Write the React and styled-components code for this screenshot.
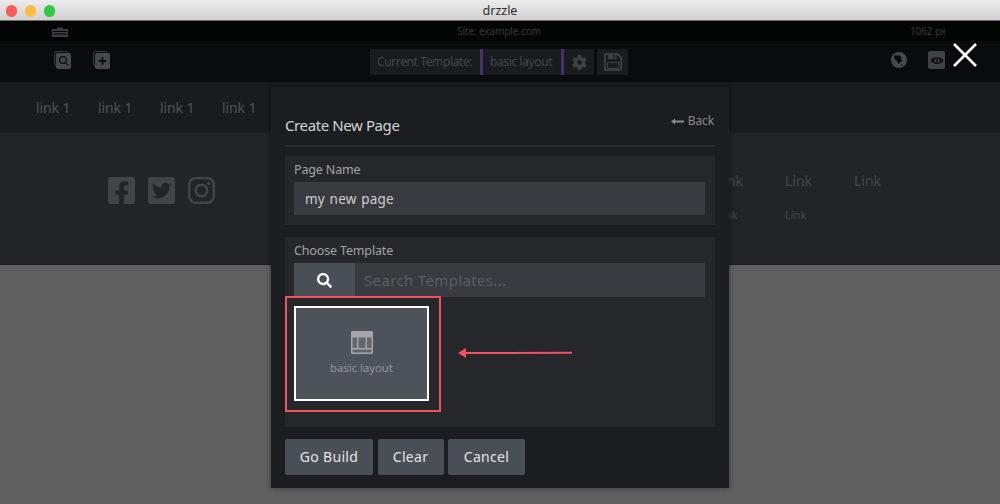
import React from "react";
import styled, { createGlobalStyle } from "styled-components";
import { FaFacebookSquare, FaTwitterSquare, FaInstagram, FaSearch } from "react-icons/fa";
import { FaGear } from "react-icons/fa6";

const Global = createGlobalStyle`
  html, body { margin: 0; padding: 0; background: #606060; }
  body { font-family: "Noto Sans", "Open Sans", sans-serif; }
  * { box-sizing: border-box; }
`;

const Screen = styled.div`
  position: relative;
  width: 1000px;
  height: 504px;
  overflow: hidden;
  display: flex;
  flex-direction: column;
`;

const TitleBar = styled.div`
  position: relative;
  flex: 0 0 21px;
  display: flex;
  align-items: center;
  justify-content: center;
  background: linear-gradient(#ececec, #d2d0d2);
  border-bottom: 1px solid #6b6b6b;
  font-size: 12.5px;
  color: #2c2c2c;
`;

const Lights = styled.div`
  position: absolute;
  left: 5.5px;
  top: 5px;
  display: flex;
  gap: 7.5px;
`;

const Light = styled.span`
  width: 11.5px;
  height: 11.5px;
  border-radius: 50%;
  background: ${(p) => p.$color};
`;

const InfoRow = styled.div`
  flex: 0 0 20px;
  display: grid;
  grid-template-columns: 457px 453px 90px;
  align-items: center;
  background: #030404;
  font-size: 10px;
  letter-spacing: -0.1px;
  color: #383839;
`;

const Briefcase = styled.svg`
  display: block;
  width: 16px;
  height: 10px;
  margin: 1px 0 0 52px;
`;

const ToolRow = styled.div`
  flex: 0 0 41px;
  display: flex;
  align-items: flex-start;
  background: #0a0b0c;
`;

const ToolLeft = styled.div`
  display: flex;
  gap: 22px;
  padding: 10px 0 0 54px;
  width: 370px;
`;

const TemplateGroup = styled.div`
  margin-top: 8px;
  display: flex;
  height: 26px;
  width: 258px;
  color: #45464a;
  font-size: 12px;
  letter-spacing: -0.38px;
  line-height: 26px;
`;

const TemplateCell = styled.div`
  background: #1a1b1e;
  width: ${(p) => p.$width}px;
  padding-left: ${(p) => p.$pad || 0}px;
  flex: none;
  white-space: nowrap;
  display: flex;
  align-items: center;
  justify-content: ${(p) => (p.$center ? "center" : "flex-start")};
  border-right: ${(p) => (p.$accent ? "3px solid #47306f" : "none")};
  margin-right: ${(p) => p.$gap || 0}px;
  color: ${(p) => (p.$center ? "#3f4043" : "inherit")};
`;

const ToolRight = styled.div`
  display: flex;
  align-items: center;
  gap: 21px;
  margin-left: 263px;
  padding-top: 10px;
`;

const EyeTile = styled.div`
  width: 17px;
  height: 18px;
  border-radius: 2px;
  background: #404144;
  display: flex;
  align-items: center;
  justify-content: center;
`;

const Nav = styled.div`
  flex: 0 0 51px;
  display: flex;
  align-items: center;
  gap: 28px;
  padding: 0 0 0 36px;
  background: #191c1f;
  font-size: 14px;
  letter-spacing: -0.1px;
  color: #4e5154;
`;

const NavLink = styled.span`
  width: 34px;
  white-space: nowrap;
`;

const Footer = styled.div`
  flex: 0 0 132px;
  display: flex;
  background: #232427;
  border-bottom: 1px solid #1c1d20;
`;

const Socials = styled.div`
  display: flex;
  gap: 9px;
  padding: 42px 0 0 106px;
  color: #434446;
  width: 716px;
`;

const LinkColumns = styled.div`
  display: grid;
  grid-template-columns: 69px 69px 69px;
  grid-template-rows: 20px 20px;
  row-gap: 14px;
  padding-top: 37px;
  align-items: center;
  align-content: start;
`;

const FooterLink = styled.span`
  font-size: ${(p) => (p.$small ? 11 : 14)}px;
  color: #444548;
`;

const Page = styled.div`
  flex: 1;
  background: #606060;
`;

const Modal = styled.div`
  position: absolute;
  left: 271px;
  top: 87px;
  width: 458px;
  height: 401px;
  padding: 0 14px;
  background: #1c1d20;
  box-shadow: 0 0 6px rgba(0, 0, 0, 0.45);
  display: flex;
  flex-direction: column;
`;

const ModalHead = styled.div`
  height: 60px;
  display: flex;
  justify-content: space-between;
  align-items: flex-start;
  border-bottom: 2px solid #2a2b2e;
  margin-bottom: 9px;
`;

const ModalTitle = styled.h2`
  margin: 28px 0 0;
  font-size: 15px;
  font-weight: 400;
  letter-spacing: -0.4px;
  line-height: 20px;
  color: #d4d4d4;
`;

const Back = styled.span`
  margin: 26px 1px 0 0;
  font-size: 12px;
  line-height: 16px;
  letter-spacing: -0.1px;
  color: #8b8b8e;
  display: flex;
  align-items: center;
  gap: 4px;
`;

const Panel = styled.div`
  background: #26272b;
  height: ${(p) => p.$height}px;
  padding: 5px 10px 0 9px;
  margin-bottom: ${(p) => p.$gap || 0}px;
  flex: none;
`;

const Label = styled.div`
  font-size: 12.5px;
  line-height: 17px;
  letter-spacing: -0.15px;
  color: #a3a3a6;
  margin-bottom: 4px;
`;

const TextInput = styled.div`
  height: 33px;
  background: #3a3b40;
  padding-left: 11px;
  font-size: 13.5px;
  line-height: 35px;
  letter-spacing: 0.2px;
  word-spacing: 1px;
  color: #cdcdcf;
`;

const SearchRow = styled.div`
  display: flex;
  height: 34px;
  background: #3a3b40;
`;

const SearchBtn = styled.div`
  width: 61px;
  background: #4a4f55;
  color: #fff;
  display: flex;
  align-items: center;
  justify-content: center;
`;

const Placeholder = styled.div`
  padding-left: 9px;
  font-size: 15px;
  line-height: 34px;
  letter-spacing: 0.35px;
  color: #5d5e62;
`;

const TemplateArea = styled.div`
  position: relative;
  padding-top: 9px;
`;

const TemplateCard = styled.div`
  width: 135px;
  height: 95px;
  border: 2px solid #fff;
  background: #4e5359;
  color: #92959a;
  font-size: 11.3px;
  line-height: 15px;
  display: flex;
  flex-direction: column;
  align-items: center;
  padding-top: 23px;
  gap: 6px;
`;

const Highlight = styled.div`
  position: absolute;
  left: -9px;
  top: -1px;
  width: 156px;
  height: 116px;
  border: 2px solid #f0525f;
`;

const Arrow = styled.svg`
  position: absolute;
  left: 164px;
  top: 50px;
`;

const Actions = styled.div`
  display: flex;
  gap: 4.5px;
  margin-top: 11.5px;
`;

const Btn = styled.button`
  width: ${(p) => p.$width}px;
  height: 36px;
  padding: 0;
  border: 0;
  border-radius: 2px;
  background: #4a4f55;
  color: #e4e4e6;
  font-family: inherit;
  font-size: 14px;
  letter-spacing: 0.3px;
`;

const Close = styled.svg`
  position: absolute;
  left: 952px;
  top: 42px;
`;

const CardIcon = ({ plus }) => (
  <svg width="17" height="18" viewBox="0 0 18 19">
    <rect x="0.5" y="0.5" width="14" height="15" rx="2" fill="none" stroke="#404144" />
    <rect x="2" y="2" width="16" height="17" rx="2" fill="#47484b" />
    {plus ? (
      <path d="M10 6.5v8M6 10.5h8" stroke="#0a0b0c" strokeWidth="2" />
    ) : (
      <g fill="none" stroke="#0a0b0c" strokeWidth="1.4">
        <circle cx="9.5" cy="9.5" r="3.6" />
        <path d="M12 12l3.2 3.2" />
      </g>
    )}
  </svg>
);

const SaveIcon = () => (
  <svg width="18" height="18" viewBox="0 0 18 18">
    <g fill="none" stroke="#3f4043">
      <path
        d="M2 0.9h11.3L17.1 4.7V16a1.1 1.1 0 0 1-1.1 1.1H2A1.1 1.1 0 0 1 0.9 16V2A1.1 1.1 0 0 1 2 0.9z"
        strokeWidth="1.8"
      />
      <rect x="3.5" y="9.5" width="11" height="6" strokeWidth="1" />
    </g>
    <rect x="4" y="1.5" width="8.5" height="4.5" fill="#3f4043" />
    <rect x="9.5" y="2.2" width="1.6" height="2.8" fill="#1a1b1e" />
  </svg>
);

const GlobeIcon = () => (
  <svg width="16" height="16" viewBox="0 0 16 16">
    <circle cx="8" cy="8" r="8" fill="#47484b" />
    <path d="M3 3.5h5.5l2 1.5-.5 2.5 1.5 1-4 3.5-1.5-3L3.5 7z" fill="#0a0b0c" />
    <path d="M10.5 12l1.5 1-1 1.2z" fill="#0a0b0c" />
  </svg>
);

const LayoutIcon = () => (
  <svg width="22" height="23" viewBox="0 0 22 23">
    <rect x="0" y="0" width="22" height="23" rx="1.5" fill="#a4a6a9" />
    <rect x="1.5" y="6.5" width="4.5" height="10.5" fill="#63676c" />
    <rect x="7.5" y="6.5" width="7" height="10.5" fill="#63676c" />
    <rect x="16" y="6.5" width="4.5" height="10.5" fill="#63676c" />
    <rect x="1.5" y="18.5" width="19" height="3" fill="#63676c" />
  </svg>
);

export default function App() {
  return (
    <Screen>
      <Global />
      <TitleBar>
        <Lights>
          <Light $color="#fc5b57" />
          <Light $color="#fdbc40" />
          <Light $color="#33c748" />
        </Lights>
        drzzle
      </TitleBar>
      <InfoRow>
        <Briefcase viewBox="0 0 16 10">
          <path d="M5 2V0.5h6V2h5v8H0V2z" fill="#3c3d40" />
          <path d="M1 4.5h14M1 7h14" stroke="#030404" strokeWidth="1" />
        </Briefcase>
        <span>Site: example.com</span>
        <span>1062 px</span>
      </InfoRow>
      <ToolRow>
        <ToolLeft>
          <CardIcon />
          <CardIcon plus />
        </ToolLeft>
        <TemplateGroup>
          <TemplateCell $width={113} $pad={7} $accent>Current Template:</TemplateCell>
          <TemplateCell $width={81} $pad={7} $accent>basic layout</TemplateCell>
          <TemplateCell $width={30} $center $gap={3}><FaGear size={15} /></TemplateCell>
          <TemplateCell $width={31} $center><SaveIcon /></TemplateCell>
        </TemplateGroup>
        <ToolRight>
          <GlobeIcon />
          <EyeTile>
            <svg width="14" height="9" viewBox="0 0 14 9">
              <path d="M0.5 4.5C3 0 11 0 13.5 4.5 11 9 3 9 0.5 4.5z" fill="#0a0b0c" />
              <ellipse cx="7" cy="4.5" rx="3" ry="2" fill="#404144" />
              <circle cx="7" cy="4.5" r="1.2" fill="#0a0b0c" />
            </svg>
          </EyeTile>
        </ToolRight>
      </ToolRow>
      <Nav>
        <NavLink>link 1</NavLink>
        <NavLink>link 1</NavLink>
        <NavLink>link 1</NavLink>
        <NavLink>link 1</NavLink>
      </Nav>
      <Footer>
        <Socials>
          <FaFacebookSquare size={31} />
          <FaTwitterSquare size={31} />
          <FaInstagram size={31} />
        </Socials>
        <LinkColumns>
          <FooterLink>Link</FooterLink>
          <FooterLink>Link</FooterLink>
          <FooterLink>Link</FooterLink>
          <FooterLink $small>Link</FooterLink>
          <FooterLink $small>Link</FooterLink>
        </LinkColumns>
      </Footer>
      <Page />
      <Modal>
        <ModalHead>
          <ModalTitle>Create New Page</ModalTitle>
          <Back>
            <svg width="13" height="7" viewBox="0 0 13 7">
              <path d="M0 3.5L4 0.5v2h9v2H4v2z" fill="#8b8b8e" />
            </svg>
            Back
          </Back>
        </ModalHead>
        <Panel $height={69} $gap={12}>
          <Label>Page Name</Label>
          <TextInput>my new page</TextInput>
        </Panel>
        <Panel $height={190}>
          <Label>Choose Template</Label>
          <SearchRow>
            <SearchBtn><FaSearch size={15} /></SearchBtn>
            <Placeholder>Search Templates...</Placeholder>
          </SearchRow>
          <TemplateArea>
            <TemplateCard>
              <LayoutIcon />
              basic layout
            </TemplateCard>
            <Highlight />
            <Arrow width="116" height="12" viewBox="0 0 116 12">
              <path d="M0 6L8 1v4L114 4.8v2L8 7v4z" fill="#f0525f" />
            </Arrow>
          </TemplateArea>
        </Panel>
        <Actions>
          <Btn $width={88}>Go Build</Btn>
          <Btn $width={66}>Clear</Btn>
          <Btn $width={77}>Cancel</Btn>
        </Actions>
      </Modal>
      <Close width="26" height="26" viewBox="0 0 26 26">
        <path d="M2 2l22 22M24 2L2 24" stroke="#fff" strokeWidth="2.6" />
      </Close>
    </Screen>
  );
}
